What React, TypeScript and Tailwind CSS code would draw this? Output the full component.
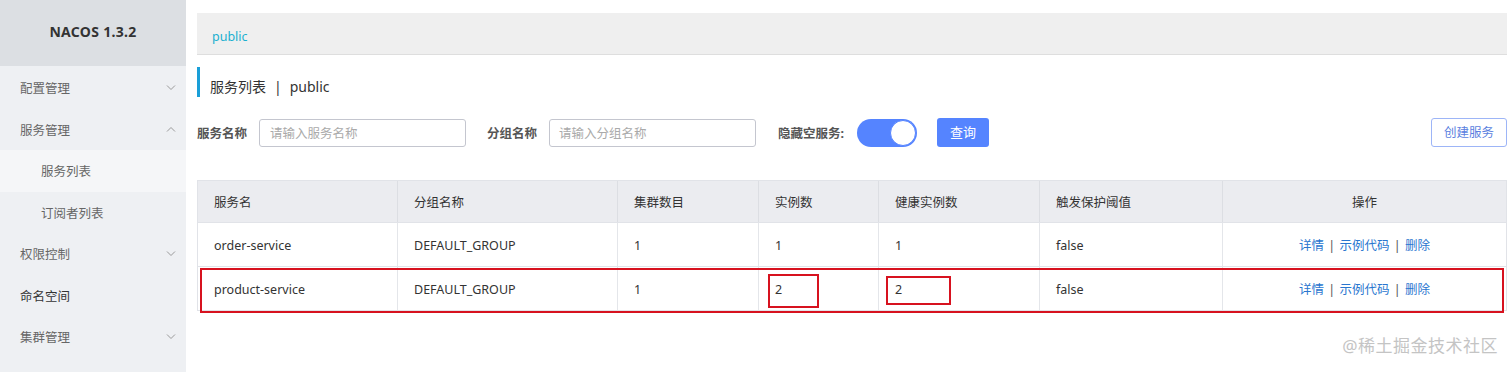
import React from "react";

const font = { fontFamily: '"Noto Sans", "Noto Sans CJK SC", sans-serif' };

function Chevron({ up }: { up?: boolean }) {
  return (
    <svg width="10" height="6" viewBox="0 0 10 6" className="text-[#999]">
      <path
        d={up ? "M1 5.5 L5 1.5 L9 5.5" : "M1 0.5 L5 4.5 L9 0.5"}
        fill="none"
        stroke="currentColor"
        strokeWidth="1"
      />
    </svg>
  );
}

const menu: { label: string; sub?: boolean; chevron?: "up" | "down"; active?: boolean; dark?: boolean }[] = [
  { label: "配置管理", chevron: "down" },
  { label: "服务管理", chevron: "up" },
  { label: "服务列表", sub: true, active: true },
  { label: "订阅者列表", sub: true },
  { label: "权限控制", chevron: "down" },
  { label: "命名空间", dark: true },
  { label: "集群管理", chevron: "down" },
];

const cols = [
  { title: "服务名", w: "w-[200px]" },
  { title: "分组名称", w: "w-[220px]" },
  { title: "集群数目", w: "w-[141px]" },
  { title: "实例数", w: "w-[120px]" },
  { title: "健康实例数", w: "w-[161px]" },
  { title: "触发保护阈值", w: "w-[183px]" },
  { title: "操作", w: "flex-1", center: true },
];

const rows = [
  ["order-service", "DEFAULT_GROUP", "1", "1", "1", "false"],
  ["product-service", "DEFAULT_GROUP", "1", "2", "2", "false"],
];

function Ops() {
  return (
    <span className="text-[#2a76cf]">
      详情 <span className="text-[#555] mx-[1px]">|</span> 示例代码{" "}
      <span className="text-[#555] mx-[1px]">|</span> 删除
    </span>
  );
}

export default function App() {
  return (
    <div style={font} className="flex w-[1512px] h-[372px] bg-white overflow-hidden relative">
      {/* Sidebar */}
      <div className="w-[186px] h-full bg-[#eef0f3] flex flex-col">
        <div className="h-[66px] bg-[#dcdfe3] flex items-center justify-center pb-[4px] text-[14px] font-bold text-[#333] tracking-[0.3px]">
          NACOS 1.3.2
        </div>
        <div className="mt-[1px] flex flex-col">
          {menu.map((m) => (
            <div
              key={m.label}
              className={`h-[41.5px] flex items-center justify-between pr-[10px] pt-[4px] text-[12.5px] ${
                m.sub ? "pl-[41px]" : "pl-[20px]"
              } ${m.active ? "bg-[#f5f6f8]" : ""} ${m.dark ? "text-[#333]" : "text-[#666]"}`}
            >
              <span>{m.label}</span>
              {m.chevron && (
                <span className="-mt-[4px]">
                  <Chevron up={m.chevron === "up"} />
                </span>
              )}
            </div>
          ))}
        </div>
      </div>

      {/* Main */}
      <div className="flex-1 pl-[11px] pr-[5px] flex flex-col">
        <div className="mt-[13px] h-[42px] bg-[#efefef] border-b border-[#dedede] flex items-center pl-[15px] pt-[7px] text-[12.5px] text-[#1bb0cf]">
          public
        </div>

        <div className="mt-[12px] h-[30px] border-l-[3px] border-[#1a9fd8] flex items-center pl-[10px] pt-[8px] text-[14px] text-[#333]">
          服务列表 <span className="mx-[8px]">|</span> public
        </div>

        <div className="mt-[21px] h-[29px] flex items-center text-[12.5px]">
          <span className="font-bold text-[#555] w-[62px] pt-[4px]">服务名称</span>
          <div className="w-[207px] h-[28px] border border-[#c4c6cf] rounded-[3px] flex items-center pl-[10px] pt-[4px] text-[#aaa]">
            请输入服务名称
          </div>
          <span className="font-bold text-[#555] ml-[21px] w-[62px] pt-[4px]">分组名称</span>
          <div className="w-[207px] h-[28px] border border-[#c4c6cf] rounded-[3px] flex items-center pl-[9px] pt-[4px] text-[#aaa]">
            请输入分组名称
          </div>
          <span className="font-bold text-[#555] ml-[22px] w-[79px] pt-[4px]">隐藏空服务:</span>
          <div className="w-[60px] h-[28px] rounded-full bg-[#5584ff] flex items-center justify-end pr-[1px]">
            <div className="w-[26px] h-[26px] rounded-full bg-white border border-[#5584ff]" />
          </div>
          <div className="ml-[20px] w-[52px] h-[29px] rounded-[3px] bg-[#5584ff] text-white flex items-center justify-center pt-[1px] text-[13px]">
            查询
          </div>
          <div className="flex-1" />
          <div className="w-[76px] h-[29px] rounded-[3px] border border-[#9db5f7] text-[#5b7fe0] flex items-center justify-center pt-[2px] text-[12.5px]">
            创建服务
          </div>
        </div>

        {/* Table */}
        <div className="mt-[33px] relative text-[12.5px] text-[#333]">
          <div className="flex h-[43px] bg-[#ebecf0] border border-[#e1e3e8]">
            {cols.map((c, i) => (
              <div
                key={c.title}
                className={`${c.w} flex items-center pt-[4px] ${c.center ? "justify-center" : "pl-[16px]"} ${
                  i < cols.length - 1 ? "border-r border-[#dcdee3]" : ""
                }`}
              >
                {c.title}
              </div>
            ))}
          </div>
          {rows.map((r, ri) => (
            <div key={ri} className="flex h-[44px] border-x border-b border-[#e1e3e8]">
              {cols.map((c, i) => (
                <div
                  key={c.title}
                  className={`${c.w} relative flex items-center pt-[4px] ${c.center ? "justify-center" : "pl-[16px]"} ${
                    i < cols.length - 1 ? "border-r border-[#e4e6ea]" : ""
                  }`}
                >
                  {c.center ? <Ops /> : r[i]}
                  {ri === 1 && i === 3 && (
                    <div className="absolute left-[9px] top-[7px] w-[51px] h-[34px] border-2 border-[#d7121f]" />
                  )}
                  {ri === 1 && i === 4 && (
                    <div className="absolute left-[7px] top-[9px] w-[65px] h-[29px] border-2 border-[#d7121f]" />
                  )}
                </div>
              ))}
            </div>
          ))}
          <div className="absolute left-[3px] top-[88px] w-[1304px] h-[45px] border-2 border-[#d7121f]" />
        </div>
      </div>

      <div className="absolute right-[14px] top-[333px] text-[17px] text-[#c4c4c4] tracking-[0.5px]">
        @稀土掘金技术社区
      </div>
    </div>
  );
}
